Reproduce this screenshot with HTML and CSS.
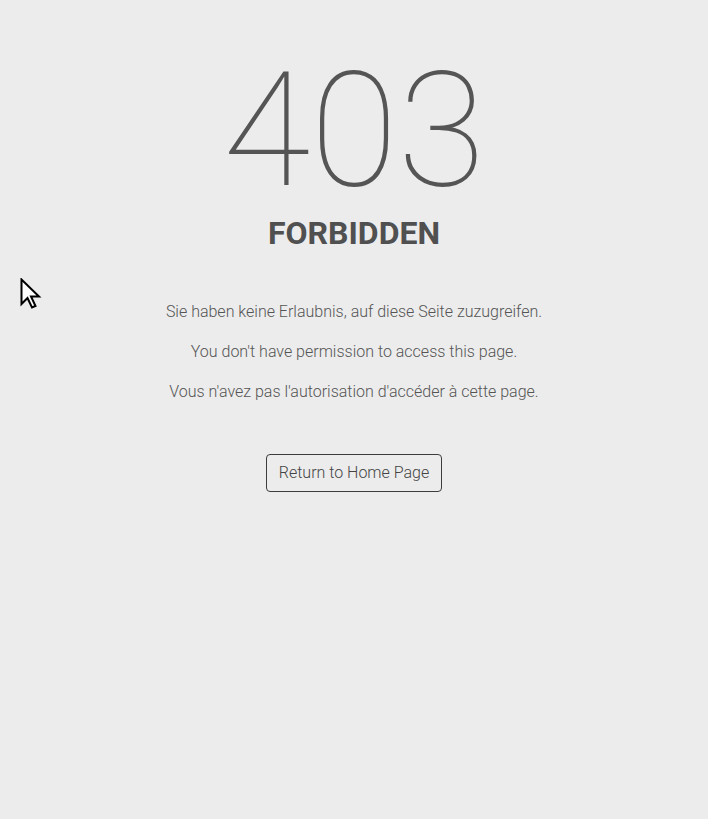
FILE: index.html
```html
<!DOCTYPE html>
<html lang="en">
<head>
<meta charset="utf-8">
<title>403 Forbidden</title>
<link rel="stylesheet" href="styles.css">
</head>
<body>
<main class="page">
  <h1 class="code">403</h1>
  <h2 class="title">FORBIDDEN</h2>
  <div class="messages">
    <p>Sie haben keine Erlaubnis, auf diese Seite zuzugreifen.</p>
    <p>You don't have permission to access this page.</p>
    <p>Vous n'avez pas l'autorisation d'accéder à cette page.</p>
  </div>
  <a class="btn" href="#">Return to Home Page</a>
</main>
<svg class="cursor" width="22" height="32" viewBox="0 0 22 32" aria-hidden="true">
  <path d="M1.5 1.5 L1.5 26 L7.5 20 L12 29.5 L15.5 28 L11 18.5 L19 18.5 Z" fill="#fff" stroke="#000" stroke-width="2" stroke-linejoin="miter"/>
</svg>
</body>
</html>
```
FILE: styles.css
```css
html, body {
  margin: 0;
  padding: 0;
}
body {
  background: #ececec;
  color: #555555;
  font-family: Roboto, "Liberation Sans", sans-serif;
  min-height: 819px;
}
.page {
  display: flex;
  flex-direction: column;
  align-items: center;
  text-align: center;
  padding-top: 51px;
}
.code {
  margin: 0;
  font-size: 160px;
  font-weight: 100;
  line-height: 1;
  color: #555555;
}
.title {
  margin: 3px 0 0;
  font-size: 32px;
  font-weight: 700;
  line-height: 1.2;
  color: #505050;
}
.messages {
  margin-top: 48px;
  display: flex;
  flex-direction: column;
  gap: 16px;
}
.messages p {
  margin: 0;
  font-size: 16px;
  font-weight: 300;
  line-height: 24px;
  color: #555555;
}
.btn {
  margin-top: 50px;
  display: inline-block;
  padding: 6px 12px;
  border: 1px solid #3c3c3c;
  border-radius: 4px;
  font-size: 16px;
  font-weight: 300;
  line-height: 24px;
  color: #444444;
  text-decoration: none;
}
.cursor {
  position: absolute;
  left: 20px;
  top: 278px;
}
```
